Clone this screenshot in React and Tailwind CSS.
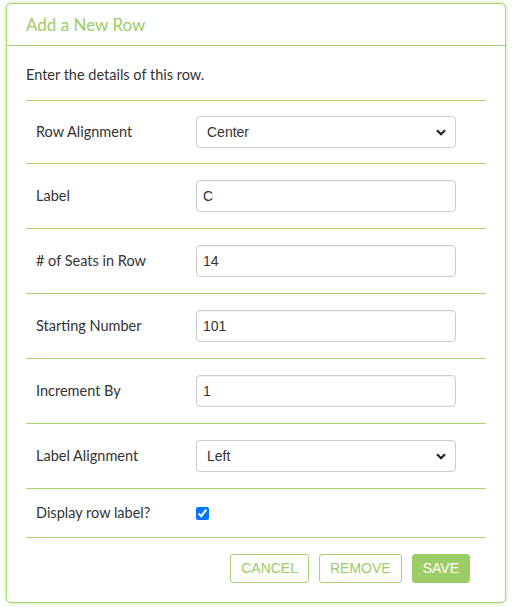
import React from 'react';

const Row = ({ label, children, pad = 'py-4' }) => (
  <div className={`flex items-center border-b border-[#a8d173] px-[10px] ${pad}`}>
    <div className="w-[160px] text-[14.5px] leading-[20px] text-[#333]">{label}</div>
    <div className="w-[260px]">{children}</div>
  </div>
);

const TextInput = ({ value }) => (
  <input
    type="text"
    defaultValue={value}
    className="h-[32px] w-full rounded-[4px] border border-[#ccc] px-[6px] text-[14px] text-[#333] shadow-[inset_0_1px_1px_rgba(0,0,0,0.05)] outline-none"
    style={{ fontFamily: '"Liberation Sans", Arial, sans-serif' }}
  />
);

const Select = ({ value }) => (
  <div className="relative">
    <select
      defaultValue={value}
      className="h-[32px] w-full appearance-none rounded-[4px] border border-[#ccc] bg-white pl-[10px] text-[14px] text-[#333] outline-none"
      style={{ fontFamily: '"Liberation Sans", Arial, sans-serif' }}
    >
      <option>{value}</option>
    </select>
    <svg className="pointer-events-none absolute right-[10px] top-[13px]" width="10" height="7" viewBox="0 0 10 7">
      <path d="M1 1.2 L5 5.2 L9 1.2" fill="none" stroke="#222" strokeWidth="2.2" />
    </svg>
  </div>
);

const Button = ({ children, primary }) => (
  <button
    className={`h-[29px] rounded-[3px] border px-[10px] text-[14px] ${
      primary ? 'border-[#9ccc65] bg-[#9ccc65] text-white' : 'border-[#a8d173] bg-white text-[#9ccc65]'
    }`}
    style={{ fontFamily: '"Liberation Sans", Arial, sans-serif' }}
  >
    {children}
  </button>
);

export default function App() {
  return (
    <div className="h-[607px] bg-white pl-[6px] pt-[3px]" style={{ fontFamily: 'Lato, "Open Sans", sans-serif' }}>
      <div className="h-[600px] w-[500px] rounded-[5px] border border-[#a8d173] bg-white shadow-[0_0_5px_rgba(150,205,90,0.55)]">
        <div className="flex h-[42px] items-center border-b border-[#a8d173] px-[19px]">
          <h2 className="text-[17px] text-[#9ccc65]">Add a New Row</h2>
        </div>
        <div className="px-[19px] pt-[20px]">
          <p className="mb-4 text-[14.5px] leading-[18px] text-[#333]">Enter the details of this row.</p>
          <div className="border-t border-[#a8d173]">
            <Row label="Row Alignment" pad="py-[15px]"><Select value="Center" /></Row>
            <Row label="Label"><TextInput value="C" /></Row>
            <Row label="# of Seats in Row"><TextInput value="14" /></Row>
            <Row label="Starting Number"><TextInput value="101" /></Row>
            <Row label="Increment By"><TextInput value="1" /></Row>
            <Row label="Label Alignment"><Select value="Left" /></Row>
            <Row label="Display row label?" pad="py-[14px]">
              <input type="checkbox" defaultChecked className="block h-[13px] w-[13px] accent-[#0075ff]" />
            </Row>
          </div>
          <div className="flex justify-end gap-[10px] pr-4 pt-4">
            <Button>CANCEL</Button>
            <Button>REMOVE</Button>
            <Button primary>SAVE</Button>
          </div>
        </div>
      </div>
    </div>
  );
}
